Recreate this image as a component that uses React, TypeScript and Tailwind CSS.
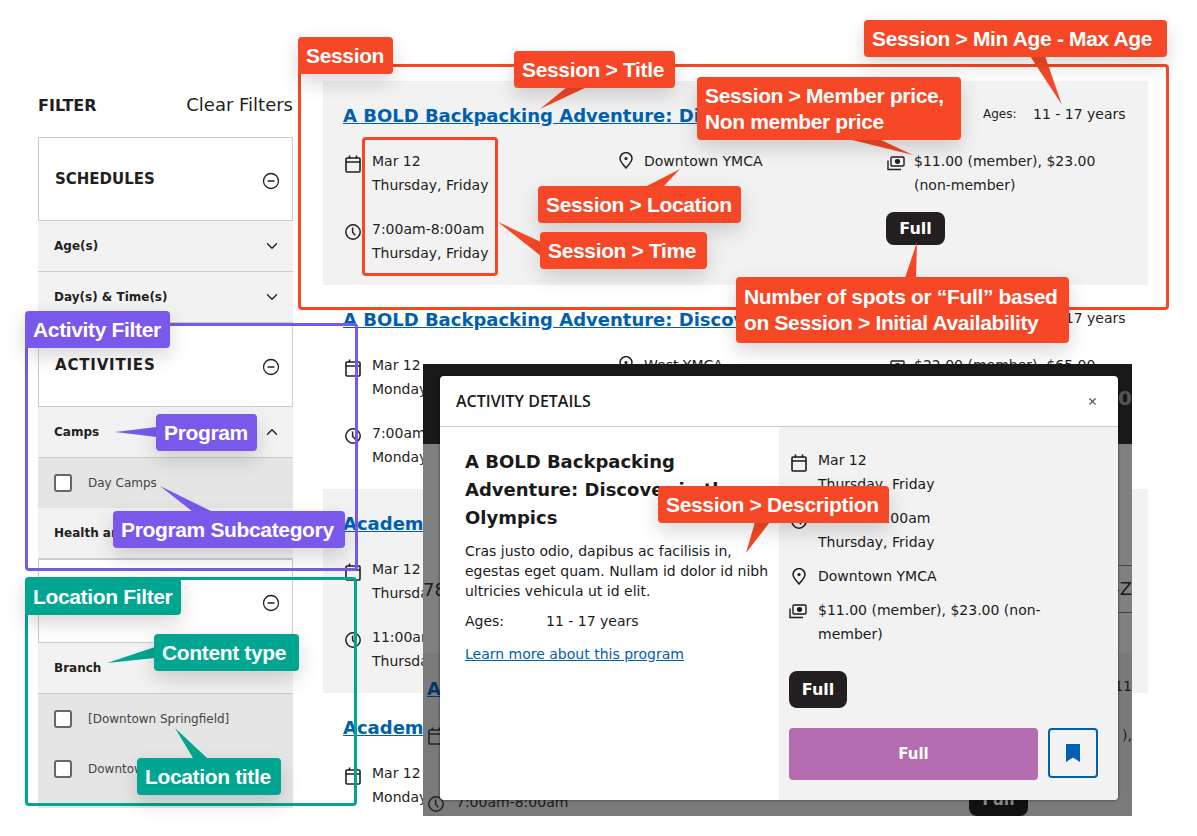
import React from 'react';
import { ChevronDown, ChevronUp, CircleMinus, X } from 'lucide-react';

const CalendarIcon = ({ className = '' }: { className?: string }) => (
  <svg viewBox="0 0 16 18" className={`w-4 h-[18px] ${className}`} fill="none" stroke="currentColor" strokeWidth="1.6">
    <rect x="1" y="3" width="14" height="14" rx="1" />
    <path d="M1 7h14M4.5 0.5v3M11.5 0.5v3" />
  </svg>
);

const ClockIcon = ({ className = '' }: { className?: string }) => (
  <svg viewBox="0 0 16 16" className={`w-4 h-4 ${className}`} fill="none" stroke="currentColor" strokeWidth="1.5">
    <circle cx="8" cy="8" r="7.2" />
    <path d="M7.6 3.6v4.6l2.6 3" />
  </svg>
);

const PinIcon = ({ className = '' }: { className?: string }) => (
  <svg viewBox="0 0 14 17" className={`w-[14px] h-[17px] ${className}`} fill="none" stroke="currentColor" strokeWidth="1.5">
    <path d="M7 16C3.5 12.2 1 9.6 1 6.6A6 6 0 0 1 13 6.6C13 9.6 10.5 12.2 7 16Z" />
    <circle cx="7" cy="6.5" r="1.6" fill="currentColor" stroke="none" />
  </svg>
);

const MoneyIcon = ({ className = '' }: { className?: string }) => (
  <svg viewBox="0 0 18 15" className={`w-[18px] h-[15px] ${className}`} fill="none" stroke="currentColor" strokeWidth="1.4">
    <rect x="4" y="1" width="13" height="9" rx="1" />
    <ellipse cx="10.5" cy="5.5" rx="2.6" ry="2.4" fill="currentColor" stroke="none" />
    <path d="M1 4.5v9h13" />
  </svg>
);

type Session = {
  title: string;
  date: string;
  days: string;
  time: string;
  location: string;
  price: string;
};

const sessions: Session[] = [
  {
    title: 'A BOLD Backpacking Adventure: Discover in the Olympics',
    date: 'Mar 12',
    days: 'Thursday, Friday',
    time: '7:00am-8:00am',
    location: 'Downtown YMCA',
    price: '$11.00 (member), $23.00 (non-member)',
  },
  {
    title: 'A BOLD Backpacking Adventure: Discover in the Olympics',
    date: 'Mar 12',
    days: 'Monday, Tuesday',
    time: '7:00am-8:00am',
    location: 'West YMCA',
    price: '$22.00 (member), $65.00 (non-member)',
  },
  {
    title: 'Academic Enrichment Camp',
    date: 'Mar 12',
    days: 'Thursday, Friday',
    time: '11:00am-12:00pm',
    location: 'Downtown YMCA',
    price: '$11.00 (member), $23.00 (non-member)',
  },
  {
    title: 'Academic Enrichment Camp',
    date: 'Mar 12',
    days: 'Monday, Tuesday',
    time: '7:00am-8:00am',
    location: 'West YMCA',
    price: '$22.00 (member), $65.00 (non-member)',
  },
];

const SessionRow = ({ s, shaded }: { s: Session; shaded: boolean }) => (
  <div className={`h-[204px] shrink-0 px-5 pt-[22px] ${shaded ? 'bg-[#f2f2f2]' : 'bg-white'}`}>
    <div className="flex justify-between h-6 leading-6">
      <a className="pt-px text-[18px] font-bold text-[#0060af] underline whitespace-nowrap">{s.title}</a>
      <div className="flex w-[145px] -mt-px text-[14px] shrink-0">
        <span className="w-[50px] text-[12px]">Ages:</span>
        <span>11 - 17 years</span>
      </div>
    </div>
    <div className="grid grid-cols-[274px_269px_1fr] mt-[22px] text-[14px] leading-6">
      <div className="flex flex-col gap-5">
        <div className="flex">
          <CalendarIcon className="ml-0.5 mt-[6px] mr-[11px] shrink-0" />
          <div>
            <div>{s.date}</div>
            <div>{s.days}</div>
          </div>
        </div>
        <div className="flex">
          <ClockIcon className="ml-0.5 mt-[7px] mr-[11px] shrink-0" />
          <div>
            <div>{s.time}</div>
            <div>{s.days}</div>
          </div>
        </div>
      </div>
      <div className="flex">
        <PinIcon className="ml-0.5 mt-[3px] mr-[11px] shrink-0" />
        <div>{s.location}</div>
      </div>
      <div>
        <div className="flex">
          <MoneyIcon className="ml-px mt-[7px] mr-[9px] shrink-0" />
          <div className="w-[205px]">{s.price}</div>
        </div>
        <div className="mt-[15px] w-[59px] h-[33px] pt-px rounded-lg bg-[#231f20] text-white font-bold text-[16px] flex items-center justify-center">
          Full
        </div>
      </div>
    </div>
  </div>
);

const SectionHead = ({ title, wide = false }: { title: string; wide?: boolean }) => (
  <div className="h-[84px] border border-[#cccccc] flex items-center justify-between pl-4 pr-[12px] bg-white">
    <span className={`text-[15px] font-bold ${wide ? 'tracking-[0.8px]' : ''}`}>{title}</span>
    <CircleMinus className="w-[18px] h-[18px] mt-1" strokeWidth={1.7} />
  </div>
);

const AccordionRow = ({ label, open = false, icon = true }: { label: string; open?: boolean; icon?: boolean }) => (
  <div className="h-[51px] bg-[#f2f2f2] border-b border-[#cccccc] flex items-center justify-between pl-4 pr-3 text-[12px] font-bold">
    <span>{label}</span>
    {icon && (open ? <ChevronUp className="w-[18px] h-[18px]" strokeWidth={1.8} /> : <ChevronDown className="w-[18px] h-[18px]" strokeWidth={1.8} />)}
  </div>
);

const CheckRow = ({ label }: { label: string }) => (
  <div className="h-[50px] bg-[#e5e5e5] flex items-center pl-4 text-[12px] text-[#444444]">
    <span className="w-[18px] h-[18px] border-2 border-[#666666] rounded-[3px] bg-white mr-4 shrink-0" />
    <span className="-mt-px">{label}</span>
  </div>
);

const Sidebar = () => (
  <aside className="w-[255px] ml-[38px] h-[808px] overflow-hidden shrink-0">
    <div className="h-[137px] pt-[95px] flex justify-between items-start">
      <span className="text-[16px] font-bold leading-[22px]">FILTER</span>
      <span className="text-[18px] leading-[22px] -mt-px">Clear Filters</span>
    </div>
    <SectionHead title="SCHEDULES" />
    <AccordionRow label="Age(s)" />
    <AccordionRow label="Day(s) & Time(s)" />
    <SectionHead title="ACTIVITIES" wide />
    <AccordionRow label="Camps" open />
    <CheckRow label="Day Camps" />
    <AccordionRow label="Health and Wellness" />
    <SectionHead title="LOCATIONS" />
    <AccordionRow label="Branch" icon={false} />
    <CheckRow label="[Downtown Springfield]" />
    <CheckRow label="Downtown YMCA" />
    <CheckRow label="West YMCA" />
  </aside>
);

const Modal = () => (
  <div className="absolute left-[17px] top-3 w-[678px] h-[424px] bg-white rounded shadow-[0_0_3px_rgba(0,0,0,0.6)] overflow-hidden flex flex-col">
    <div className="h-[51px] shrink-0 border-b border-[#cccccc] flex items-center justify-between pl-4 pr-[20px]">
      <span className="text-[16px] font-semibold font-['Open_Sans',sans-serif]">ACTIVITY DETAILS</span>
      <X className="w-[11px] h-[11px] text-[#555555]" strokeWidth={2.4} />
    </div>
    <div className="flex-1 flex">
      <div className="w-[339px] pl-[25px] pr-2 pt-[21px]">
        <h2 className="text-[18px] font-bold leading-7">A BOLD Backpacking Adventure: Discover in the Olympics</h2>
        <p className="text-[14px] leading-5 mt-[9px]">
          Cras justo odio, dapibus ac facilisis in, egestas eget quam. Nullam id dolor id nibh ultricies vehicula ut id elit.
        </p>
        <div className="flex text-[14px] leading-5 mt-[10px]">
          <span className="w-[81px]">Ages:</span>
          <span>11 - 17 years</span>
        </div>
        <a className="block text-[14px] leading-5 mt-[13px] text-[#0060af] underline">Learn more about this program</a>
      </div>
      <div className="flex-1 bg-[#f2f2f2] pl-[10px] pr-5 pt-[21px] text-[14px] leading-6">
        <div className="flex">
          <CalendarIcon className="ml-0.5 mt-[6px] mr-[11px] shrink-0" />
          <div>
            <div>Mar 12</div>
            <div>Thursday, Friday</div>
          </div>
        </div>
        <div className="flex mt-[10px]">
          <ClockIcon className="ml-0.5 mt-[7px] mr-[11px] shrink-0" />
          <div>
            <div>7:00am-8:00am</div>
            <div>Thursday, Friday</div>
          </div>
        </div>
        <div className="flex mt-[10px]">
          <PinIcon className="ml-[3px] mt-[4px] mr-[12px] shrink-0" />
          <div>Downtown YMCA</div>
        </div>
        <div className="flex mt-[10px]">
          <MoneyIcon className="mt-[6px] mr-[11px] shrink-0" />
          <div>$11.00 (member), $23.00 (non-member)</div>
        </div>
        <div className="mt-[25px] w-[58px] h-[37px] rounded-lg bg-[#231f20] text-white font-bold text-[16px] flex items-center justify-center">
          Full
        </div>
        <div className="flex gap-[10px] mt-5">
          <div className="w-[249px] h-[52px] rounded bg-[#b46cb0] text-white font-bold text-[15px] flex items-center justify-center">
            Full
          </div>
          <div className="w-[50px] h-[50px] rounded border-2 border-[#0060af] flex items-center justify-center">
            <svg viewBox="0 0 14 18" className="w-[14px] h-[18px]" fill="#0060af">
              <path d="M0 0h14v18l-7-4.5L0 18Z" />
            </svg>
          </div>
        </div>
      </div>
    </div>
  </div>
);

// pasted screenshot of the modal state, sits on top of the list
const ModalShot = () => (
  <div className="absolute left-[423px] top-[364px] w-[709px] h-[452px] overflow-hidden bg-[#808080] text-[#1a1a1a] text-[14px]">
    <div className="absolute inset-x-0 top-0 h-20 bg-[#191919]" />
    <div className="absolute inset-x-0 top-[289px] bottom-0 bg-[#7a7a7a]" />
    <span className="absolute right-0 top-[20px] text-[20px] font-bold text-[#555555] leading-7">10</span>
    <span className="absolute left-0 top-[212px] text-[18px] leading-7">78</span>
    <div className="absolute right-0 top-[201px] w-[14px] h-[48px] border-y border-[#444444] text-[18px] leading-[46px] whitespace-nowrap flex justify-end">-Z</div>
    <a className="absolute left-1 top-[313px] text-[18px] font-bold text-[#00386b] underline leading-6">A</a>
    <CalendarIcon className="absolute left-[5px] top-[363px] text-[#222222]" />
    <ClockIcon className="absolute left-[5px] top-[432px] text-[#222222]" />
    <span className="absolute left-[33px] top-[426px] leading-6">7:00am-8:00am</span>
    <span className="absolute right-0 top-[310px] leading-6">11</span>
    <span className="absolute right-0 top-[359px] leading-6">),</span>
    <div className="absolute left-[546px] top-[419px] w-[59px] h-[33px] rounded-lg bg-[#111111] text-[#888888] font-bold text-[16px] flex items-center justify-center">
      Full
    </div>
    <Modal />
  </div>
);

const frameStyles = {
  orange: 'border-[#f64826]',
  purple: 'border-[#7859ea]',
  green: 'border-[#00a68f]',
};

const tagStyles = {
  orange: 'bg-[#f64826]',
  purple: 'bg-[#7859ea]',
  green: 'bg-[#00a68f]',
};

const Frame = ({ c, box }: { c: keyof typeof frameStyles; box: string }) => (
  <div className={`absolute border-[3px] rounded ${frameStyles[c]} ${box}`} />
);

const Tag = ({ c, box, children }: { c: keyof typeof tagStyles; box: string; children: React.ReactNode }) => (
  <div
    className={`absolute rounded px-2 flex items-center text-white font-semibold text-[21px] leading-[26px] font-['Liberation_Sans',sans-serif] tracking-[-0.35px] whitespace-nowrap shadow-[0_8px_20px_rgba(0,0,0,0.16)] ${tagStyles[c]} ${box}`}
  >
    <div>{children}</div>
  </div>
);

const Annotations = () => (
  <>
    <Frame c="orange" box="left-[298px] top-16 w-[871px] h-[246px]" />
    <Frame c="orange" box="left-[362px] top-[137px] w-[136px] h-[139px]" />
    <Frame c="purple" box="left-[25px] top-[323px] w-[333px] h-[248px]" />
    <Frame c="green" box="left-[25px] top-[577px] w-[332px] h-[229px]" />
    <svg className="absolute left-0 top-0 w-[1197px] h-[836px] pointer-events-none">
      <g fill="#f64826">
        <polygon points="540,109 567,87 587,87" />
        <polygon points="1030,56 1045,56 1062,105" />
        <polygon points="848,139 879,139 913,155" />
        <polygon points="680,169 645,187 663,187" />
        <polygon points="498,222 541,242 541,256" />
        <polygon points="917,242 905,278 916,278" />
        <polygon points="746,553 755,522 770,522" />
      </g>
      <g fill="#7859ea">
        <polygon points="115,432 157,427 157,437" />
        <polygon points="160,486 193,512 213,512" />
      </g>
      <g fill="#00a68f">
        <polygon points="107,663 155,647 155,658" />
        <polygon points="175,728 193,758 207,758" />
      </g>
    </svg>
    <Tag c="orange" box="left-[298px] top-[37px] w-[95px] h-[37px]">Session</Tag>
    <Tag c="orange" box="left-[514px] top-[51px] w-[161px] h-[37px]">Session &gt; Title</Tag>
    <Tag c="orange" box="left-[864px] top-5 w-[303px] h-[37px]">Session &gt; Min Age - Max Age</Tag>
    <Tag c="orange" box="left-[697px] top-[77px] w-[264px] h-[63px]">
      Session &gt; Member price,
      <br />
      Non member price
    </Tag>
    <Tag c="orange" box="left-[538px] top-[186px] w-[203px] h-[37px]">Session &gt; Location</Tag>
    <Tag c="orange" box="left-[540px] top-[232px] w-[167px] h-[37px]">Session &gt; Time</Tag>
    <Tag c="orange" box="left-[736px] top-[277px] w-[333px] h-[66px]">
      Number of spots or “Full” based
      <br />
      on Session &gt; Initial Availability
    </Tag>
    <Tag c="orange" box="left-[658px] top-[486px] w-[231px] h-[37px]">Session &gt; Description</Tag>
    <Tag c="purple" box="left-[25px] top-[311px] w-[145px] h-[37px]">Activity Filter</Tag>
    <Tag c="purple" box="left-[156px] top-[414px] w-[101px] h-[37px]">Program</Tag>
    <Tag c="purple" box="left-[113px] top-[511px] w-[232px] h-[37px]">Program Subcategory</Tag>
    <Tag c="green" box="left-[25px] top-[578px] w-[156px] h-[37px]">Location Filter</Tag>
    <Tag c="green" box="left-[154px] top-[634px] w-[145px] h-[37px]">Content type</Tag>
    <Tag c="green" box="left-[137px] top-[758px] w-[144px] h-[37px]">Location title</Tag>
  </>
);

export default function App() {
  return (
    <div className="relative w-[1197px] h-[836px] overflow-hidden bg-white text-[#231f20] font-['DejaVu_Sans',sans-serif]">
      <div className="flex">
        <Sidebar />
        <main className="ml-[30px] w-[825px] h-[816px] overflow-hidden pt-[81px] flex flex-col">
          {sessions.map((s, i) => (
            <SessionRow key={i} s={s} shaded={i % 2 === 0} />
          ))}
        </main>
      </div>
      <ModalShot />
      <Annotations />
    </div>
  );
}
